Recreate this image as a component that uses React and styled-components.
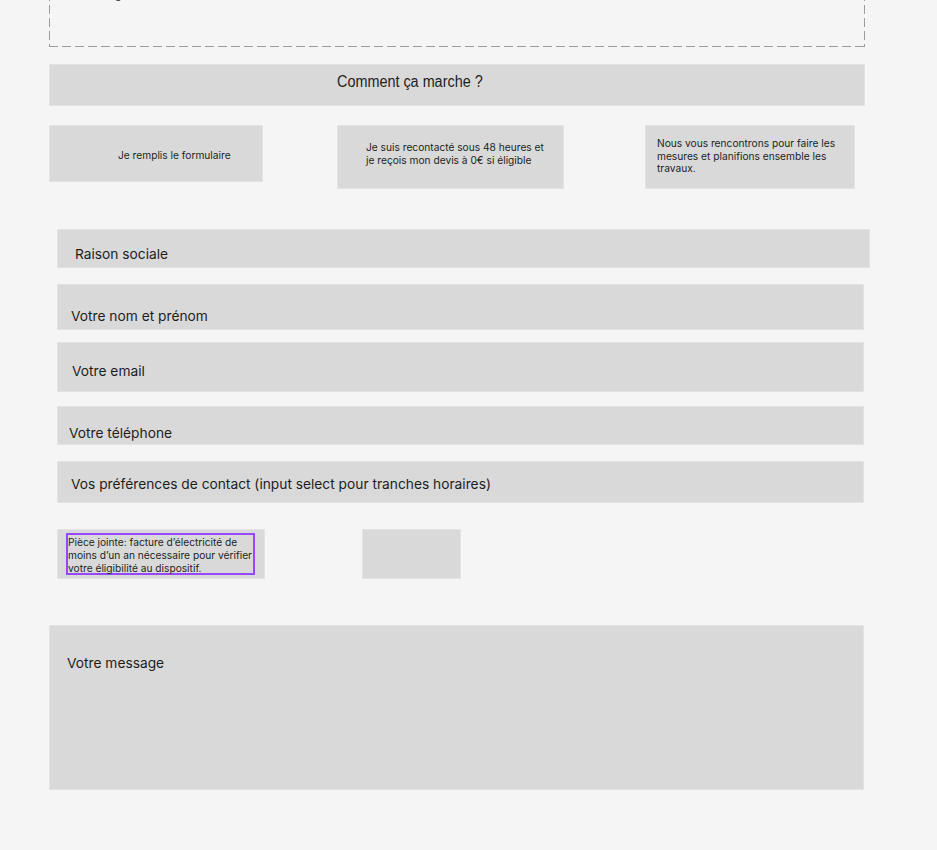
import React from "react";
import styled, { createGlobalStyle } from "styled-components";

const GlobalStyle = createGlobalStyle`
  html, body {
    margin: 0;
    padding: 0;
    background: #f5f5f5;
  }
  body {
    font-family: Inter, "Noto Sans", sans-serif;
    color: #1e1e1e;
    overflow: hidden;
  }
`;

const Page = styled.div`
  display: flex;
  flex-direction: column;
  align-items: flex-start;
  padding-left: 49px;
  width: 937px;
  height: 850px;
  box-sizing: border-box;
`;

const dash = "#9c9c9c";

const Header = styled.header`
  margin-top: -60px;
  width: 816px;
  height: 107px;
  box-sizing: border-box;
  background-image:
    repeating-linear-gradient(90deg, ${dash} 0 9px, transparent 9px 13px),
    repeating-linear-gradient(180deg, ${dash} 0 9px, transparent 9px 13px),
    repeating-linear-gradient(180deg, ${dash} 0 9px, transparent 9px 13px);
  background-size: 100% 1px, 1px 100%, 1px 100%;
  background-position: left bottom, left top, right top;
  background-repeat: no-repeat;
  display: flex;
  justify-content: space-between;
  padding: 49px 61px 0 53px;
  font-size: 11px;
  line-height: 13px;
`;

const Block = styled.div`
  box-sizing: border-box;
  background: #d9d9d9;
  border: 1px solid #e3e3e3;
  margin-top: ${(p) => p.$top}px;
  margin-left: ${(p) => p.$left || 0}px;
  width: ${(p) => p.$w}px;
  height: ${(p) => p.$h}px;
`;

const SectionTitle = styled(Block)`
  padding: 8px 0 0 287px;
  font-family: "Liberation Sans", Arial, sans-serif;
  font-size: 16px;
  line-height: 18px;
`;

const Condensed = styled.span`
  display: inline-block;
  transform: scaleX(0.9);
  transform-origin: left center;
  white-space: nowrap;
`;

const Steps = styled.div`
  display: flex;
  align-items: flex-start;
  margin-top: 19px;
`;

const Step = styled(Block)`
  padding: ${(p) => p.$pad};
  font-size: 10.2px;
  line-height: 12.7px;
  white-space: nowrap;
  display: flex;
  align-items: ${(p) => (p.$center ? "center" : "flex-start")};
`;

const Field = styled(Block)`
  padding: ${(p) => p.$pt}px 0 0 ${(p) => p.$pl}px;
  font-size: 13.75px;
  line-height: 17px;
`;

const AttachRow = styled.div`
  display: flex;
  align-items: flex-start;
  margin-top: 26px;
  margin-left: 8px;
  gap: 97px;
`;

const Attach = styled(Block)`
  padding: 3px 0 0 8px;
`;

const Selection = styled.div`
  box-sizing: border-box;
  width: 189px;
  height: 42px;
  border: 2px solid #9747ff;
  padding: 1px 0 0 0;
  font-size: 10.2px;
  line-height: 13px;
  white-space: nowrap;
`;

export default function App() {
  return (
    <>
      <GlobalStyle />
      <Page>
        <Header>
          <span>Logo</span>
          <span>nav</span>
        </Header>

        <SectionTitle $top={17} $w={816} $h={42}>
          <Condensed>Comment ça marche ?</Condensed>
        </SectionTitle>

        <Steps>
          <Step $w={214} $h={57} $pad="4px 0 0 68px" $center>
            Je remplis le formulaire
          </Step>
          <Step $left={74} $w={227} $h={64} $pad="15px 0 0 28px">
            <span>
              Je suis recontacté sous 48 heures et
              <br />
              je reçois mon devis à 0€ si éligible
            </span>
          </Step>
          <Step $left={81} $w={210} $h={64} $pad="11px 0 0 11px">
            <span>
              Nous vous rencontrons pour faire les
              <br />
              mesures et planifions ensemble les
              <br />
              travaux.
            </span>
          </Step>
        </Steps>

        <Field $top={40} $left={8} $w={813} $h={39} $pt={16} $pl={17}>
          Raison sociale
        </Field>
        <Field $top={16} $left={8} $w={807} $h={46} $pt={23} $pl={13}>
          Votre nom et prénom
        </Field>
        <Field $top={12} $left={8} $w={807} $h={50} $pt={20} $pl={14}>
          Votre email
        </Field>
        <Field $top={14} $left={8} $w={807} $h={39} $pt={18} $pl={11}>
          Votre téléphone
        </Field>
        <Field $top={16} $left={8} $w={807} $h={42} $pt={14} $pl={13}>
          Vos préférences de contact (input select pour tranches horaires)
        </Field>

        <AttachRow>
          <Attach $top={0} $w={208} $h={50}>
            <Selection>
              Pièce jointe: facture d’électricité de
              <br />
              moins d’un an nécessaire pour vérifier
              <br />
              votre éligibilité au dispositif.
            </Selection>
          </Attach>
          <Block $top={0} $w={99} $h={50} />
        </AttachRow>

        <Field $top={46} $w={815} $h={165} $pt={29} $pl={17}>
          Votre message
        </Field>
      </Page>
    </>
  );
}
